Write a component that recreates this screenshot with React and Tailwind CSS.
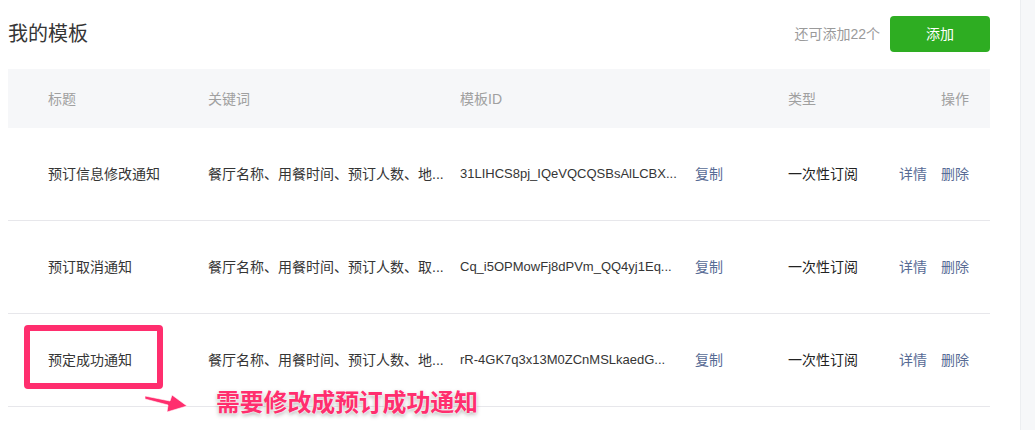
const rows = [
  {
    title: '预订信息修改通知',
    keywords: '餐厅名称、用餐时间、预订人数、地...',
    id: '31LIHCS8pj_IQeVQCQSBsAlLCBX...',
  },
  {
    title: '预订取消通知',
    keywords: '餐厅名称、用餐时间、预订人数、取...',
    id: 'Cq_i5OPMowFj8dPVm_QQ4yj1Eq...',
  },
  {
    title: '预定成功通知',
    keywords: '餐厅名称、用餐时间、预订人数、地...',
    id: 'rR-4GK7q3x13M0ZCnMSLkaedG...',
  },
];

const font = { fontFamily: '"Liberation Sans", "Noto Sans CJK SC", sans-serif' };

export default function App() {
  return (
    <div className="relative flex h-[430px] w-full overflow-hidden bg-white" style={font}>
      <div className="ml-2 mr-[30px] flex-1">
        <div className="flex items-center justify-between pt-4 pb-[17px]">
          <h1 className="text-[20px] leading-none font-normal text-[#353535]">我的模板</h1>
          <div className="flex items-center">
            <span className="mr-[10px] text-sm text-[#9a9a9a]">还可添加22个</span>
            <button className="h-9 w-[100px] rounded-[4px] bg-[#2ead22] text-sm text-white">
              添加
            </button>
          </div>
        </div>

        <div className="grid h-[59px] grid-cols-[200px_252px_328px_110px_1fr] items-center bg-[#f6f7f9] text-sm text-[#a0a0a0]">
          <div className="pl-10">标题</div>
          <div>关键词</div>
          <div>模板ID</div>
          <div>类型</div>
          <div className="pr-[21px] text-right">操作</div>
        </div>

        {rows.map((row) => (
          <div
            key={row.id}
            className="grid h-[93px] grid-cols-[200px_252px_328px_110px_1fr] items-center border-b border-[#e7e7eb] text-sm text-[#353535]"
          >
            <div className="pl-10">{row.title}</div>
            <div className="whitespace-nowrap">{row.keywords}</div>
            <div className="flex items-center whitespace-nowrap">
              <span className="w-[235px] text-[13px]">{row.id}</span>
              <span className="text-[#576b95]">复制</span>
            </div>
            <div className="text-[#222]">一次性订阅</div>
            <div className="flex justify-end gap-[14px] whitespace-nowrap pr-[21px] text-[#576b95]">
              <span>详情</span>
              <span>删除</span>
            </div>
          </div>
        ))}
      </div>

      <div className="w-[15px] border-l border-[#eceef1] bg-[#f6f7f9]" />

      {/* annotation overlay */}
      <div className="absolute top-[325px] left-[24px] h-[64px] w-[139px] rounded-[4px] border-[6px] border-[#ff2e6e]" />
      <svg className="absolute top-[388px] left-[140px]" width="52" height="28" viewBox="0 0 52 28">
        <polygon
          points="5,8 30,13 32,7 47,18 27,24 28,17 5,11"
          fill="#ff2e6e"
          stroke="#fff"
          strokeWidth="0.6"
        />
      </svg>
      <div
        className="absolute top-[389px] left-[216px] text-[24px] leading-none font-bold tracking-[-0.2px] text-[#ff2e6e] [text-shadow:0_0_2px_#fff,0_0_2px_#fff,0_2px_4px_rgba(0,0,0,0.35)]"
        style={{ fontFamily: '"Noto Sans CJK SC", sans-serif' }}
      >
        需要修改成预订成功通知
      </div>
    </div>
  );
}
